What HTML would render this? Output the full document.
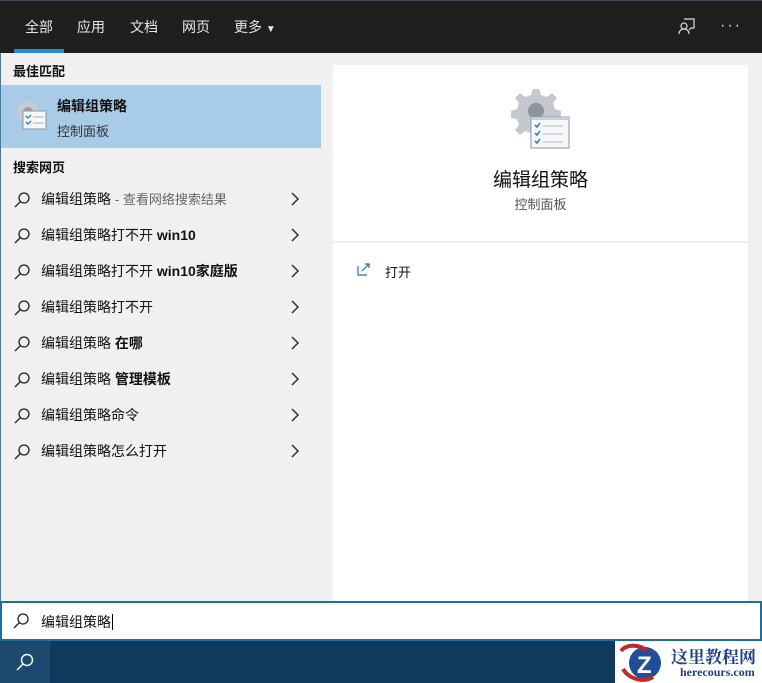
<!DOCTYPE html>
<html><head><meta charset="utf-8"><style>
*{margin:0;padding:0;box-sizing:border-box}
body{width:762px;height:683px;overflow:hidden;background:#f0f0f0;font-family:"Liberation Sans","Noto Sans CJK SC",sans-serif;position:relative}
.top{position:absolute;left:0;top:0;width:762px;height:53px;background:#1f1f1f;border-top:1px solid #3a4a5a}
.tab{position:absolute;top:16px;color:#e8e8e8;font-size:14px}
.ul{position:absolute;left:14px;top:48px;width:50px;height:4px;background:#2b88d8}
.left{position:absolute;left:0;top:53px;width:321px;height:548px;background:#f0f0f0;border-left:1px solid #4a7a9a}
.h{position:absolute;left:13px;font-size:13px;font-weight:bold;color:#111}
.sel{position:absolute;left:1px;top:85px;width:320px;height:63px;background:#a8cbe8}
.row{position:absolute;left:0;width:321px;height:36px;font-size:14px;color:#111}
.row .t{position:absolute;left:41px;top:8px;white-space:nowrap}
.row .g{color:#666;font-size:13px}
.row svg.m{position:absolute;left:13px;top:10px}
.row .c{position:absolute;left:290px;top:11px}
.card{position:absolute;left:333px;top:65px;width:415px;height:536px;background:#fff}
.sb{position:absolute;left:0;top:601px;width:762px;height:40px;background:#fff;border:2px solid #1e6e9e}
.tb{position:absolute;left:0;top:641px;width:762px;height:42px;background:#0f3a5c}
.tbs{position:absolute;left:0;top:0;width:50px;height:42px;background:#1b4a6e}
</style></head><body>
<div class="top">
<span class="tab" style="left:25px">全部</span>
<span class="tab" style="left:77px">应用</span>
<span class="tab" style="left:130px">文档</span>
<span class="tab" style="left:182px">网页</span>
<span class="tab" style="left:234px">更多 <span style="font-size:10px">▼</span></span>
<div class="ul"></div>
<svg style="position:absolute;left:678px;top:16px" width="18" height="18" viewBox="0 0 18 18" fill="none" stroke="#ddd" stroke-width="1.2"><path d="M6 2h10v9h-3l-2 2"/><circle cx="6" cy="9" r="3"/><path d="M1 17c0-3 2-5 5-5s5 2 5 5"/></svg>
<span style="position:absolute;left:720px;top:16px;color:#ddd;font-size:16px;letter-spacing:2px">···</span>
</div>
<div class="left">
</div>
<div class="h" style="top:61px">最佳匹配</div>
<div class="sel"></div>
<svg style="position:absolute;left:14px;top:98px" width="34" height="34" viewBox="0 0 34 34"><circle cx="14" cy="14" r="11" fill="#c8ccd2"/><circle cx="14" cy="14" r="5" fill="#9aa0a8"/><rect x="9" y="13" width="23" height="18" fill="#f4f6f8" stroke="#8a96a4"/><path d="M12 18l2 2 3-3M12 24l2 2 3-3" stroke="#2b7fd0" fill="none" stroke-width="1.3"/><path d="M19 19h10M19 25h10" stroke="#aab"/></svg>
<div style="position:absolute;left:57px;top:96px;font-size:14px;font-weight:bold;color:#111">编辑组策略</div>
<div style="position:absolute;left:57px;top:121px;font-size:13px;color:#333">控制面板</div>
<div class="h" style="top:157px">搜索网页</div>
<div style="position:absolute;left:0;top:181px">
<div class="row" style="top:0"><svg class="m" width="18" height="18" viewBox="0 0 18 18" fill="none" stroke="#222" stroke-width="1.3"><circle cx="11" cy="7" r="5"/><path d="M7.5 10.5L2 16"/></svg><span class="t">编辑组策略 <span class="g">- 查看网络搜索结果</span></span><svg class="c" width="10" height="14"><path d="M2 1l6 6-6 6" stroke="#333" fill="none" stroke-width="1.5"/></svg></div>
<div class="row" style="top:36px"><svg class="m" width="18" height="18" viewBox="0 0 18 18" fill="none" stroke="#222" stroke-width="1.3"><circle cx="11" cy="7" r="5"/><path d="M7.5 10.5L2 16"/></svg><span class="t">编辑组策略打不开 <b>win10</b></span><svg class="c" width="10" height="14"><path d="M2 1l6 6-6 6" stroke="#333" fill="none" stroke-width="1.5"/></svg></div>
<div class="row" style="top:72px"><svg class="m" width="18" height="18" viewBox="0 0 18 18" fill="none" stroke="#222" stroke-width="1.3"><circle cx="11" cy="7" r="5"/><path d="M7.5 10.5L2 16"/></svg><span class="t">编辑组策略打不开 <b>win10家庭版</b></span><svg class="c" width="10" height="14"><path d="M2 1l6 6-6 6" stroke="#333" fill="none" stroke-width="1.5"/></svg></div>
<div class="row" style="top:108px"><svg class="m" width="18" height="18" viewBox="0 0 18 18" fill="none" stroke="#222" stroke-width="1.3"><circle cx="11" cy="7" r="5"/><path d="M7.5 10.5L2 16"/></svg><span class="t">编辑组策略打不开</span><svg class="c" width="10" height="14"><path d="M2 1l6 6-6 6" stroke="#333" fill="none" stroke-width="1.5"/></svg></div>
<div class="row" style="top:144px"><svg class="m" width="18" height="18" viewBox="0 0 18 18" fill="none" stroke="#222" stroke-width="1.3"><circle cx="11" cy="7" r="5"/><path d="M7.5 10.5L2 16"/></svg><span class="t">编辑组策略 <b>在哪</b></span><svg class="c" width="10" height="14"><path d="M2 1l6 6-6 6" stroke="#333" fill="none" stroke-width="1.5"/></svg></div>
<div class="row" style="top:180px"><svg class="m" width="18" height="18" viewBox="0 0 18 18" fill="none" stroke="#222" stroke-width="1.3"><circle cx="11" cy="7" r="5"/><path d="M7.5 10.5L2 16"/></svg><span class="t">编辑组策略 <b>管理模板</b></span><svg class="c" width="10" height="14"><path d="M2 1l6 6-6 6" stroke="#333" fill="none" stroke-width="1.5"/></svg></div>
<div class="row" style="top:216px"><svg class="m" width="18" height="18" viewBox="0 0 18 18" fill="none" stroke="#222" stroke-width="1.3"><circle cx="11" cy="7" r="5"/><path d="M7.5 10.5L2 16"/></svg><span class="t">编辑组策略命令</span><svg class="c" width="10" height="14"><path d="M2 1l6 6-6 6" stroke="#333" fill="none" stroke-width="1.5"/></svg></div>
<div class="row" style="top:252px"><svg class="m" width="18" height="18" viewBox="0 0 18 18" fill="none" stroke="#222" stroke-width="1.3"><circle cx="11" cy="7" r="5"/><path d="M7.5 10.5L2 16"/></svg><span class="t">编辑组策略怎么打开</span><svg class="c" width="10" height="14"><path d="M2 1l6 6-6 6" stroke="#333" fill="none" stroke-width="1.5"/></svg></div>
</div>
<div class="card">
<svg style="position:absolute;left:178px;top:22px" width="62" height="64" viewBox="0 0 62 64"><path d="M22 2l6 0 2 6 6 2 5-4 5 5-4 5 2 6 6 2v7l-6 1-2 6 4 5-5 5-5-4-6 2-2 6h-6l-2-6-6-2-5 4-5-5 4-5-2-6-6-1v-7l6-2 2-6-4-5 5-5 5 4 6-2z" fill="#c5c9cf"/><circle cx="25" cy="24" r="8" fill="#8e949c"/><rect x="20" y="30" width="38" height="31" fill="#f5f7f9" stroke="#8a96a4"/><rect x="20" y="30" width="38" height="3" fill="#c8ced6"/><path d="M24 38l2 2 3-4M24 46l2 2 3-4M24 54l2 2 3-4" stroke="#2b7fd0" fill="none" stroke-width="1.6"/><path d="M32 39h20M32 47h20M32 55h20" stroke="#b0b6be"/></svg>
<div style="position:absolute;left:0;width:415px;top:100px;text-align:center;font-size:19px;color:#111">编辑组策略</div>
<div style="position:absolute;left:0;width:415px;top:129px;text-align:center;font-size:13px;color:#555">控制面板</div>
<div style="position:absolute;left:0;top:176px;width:415px;height:2px;background:#eeeeee"></div>
<svg style="position:absolute;left:24px;top:197px" width="14" height="14" viewBox="0 0 14 14" fill="none" stroke="#1e6eb0" stroke-width="1.2"><path d="M1 4v9h9"/><path d="M5 9l7-7M8 2h4v4"/></svg>
<div style="position:absolute;left:52px;top:197px;font-size:13px;color:#111">打开</div>
</div>
<div class="sb">
<svg style="position:absolute;left:10px;top:9px" width="18" height="18" viewBox="0 0 18 18" fill="none" stroke="#222" stroke-width="1.3"><circle cx="11" cy="7" r="5"/><path d="M7.5 10.5L2 16"/></svg>
<span style="position:absolute;left:39px;top:9px;font-size:14px;color:#111">编辑组策略<span style="border-left:1px solid #000;margin-left:1px"></span></span>
</div>
<div class="tb"><div class="tbs"><svg style="position:absolute;left:15px;top:11px" width="20" height="20" viewBox="0 0 20 20" fill="none" stroke="#fff" stroke-width="1.4"><circle cx="12" cy="8" r="5.5"/><path d="M8 12L2 18"/></svg></div>
<div style="position:absolute;left:615px;top:0;width:147px;height:42px;background:#fff"></div>
<svg style="position:absolute;left:617px;top:2px" width="50" height="40" viewBox="0 0 50 40"><circle cx="28" cy="20" r="16" fill="#1f4f9a"/><path d="M4 8c6-8 20-6 26 0" stroke="#c4262e" stroke-width="4" fill="none"/><path d="M6 26c6 10 20 14 30 8" stroke="#c4262e" stroke-width="4" fill="none"/><text x="20" y="30" font-family="Liberation Sans" font-weight="bold" font-size="24" fill="#fff">Z</text></svg>
<div style="position:absolute;left:671px;top:2px;font-family:'Liberation Serif','Noto Serif CJK SC',serif;font-weight:bold;font-size:17px;color:#1f3f8a">这里教程网</div>
<div style="position:absolute;left:680px;top:24px;font-family:'Liberation Serif',serif;font-weight:bold;font-size:12px;color:#1f3f8a">herecours.com</div>
</div>
</body></html>
